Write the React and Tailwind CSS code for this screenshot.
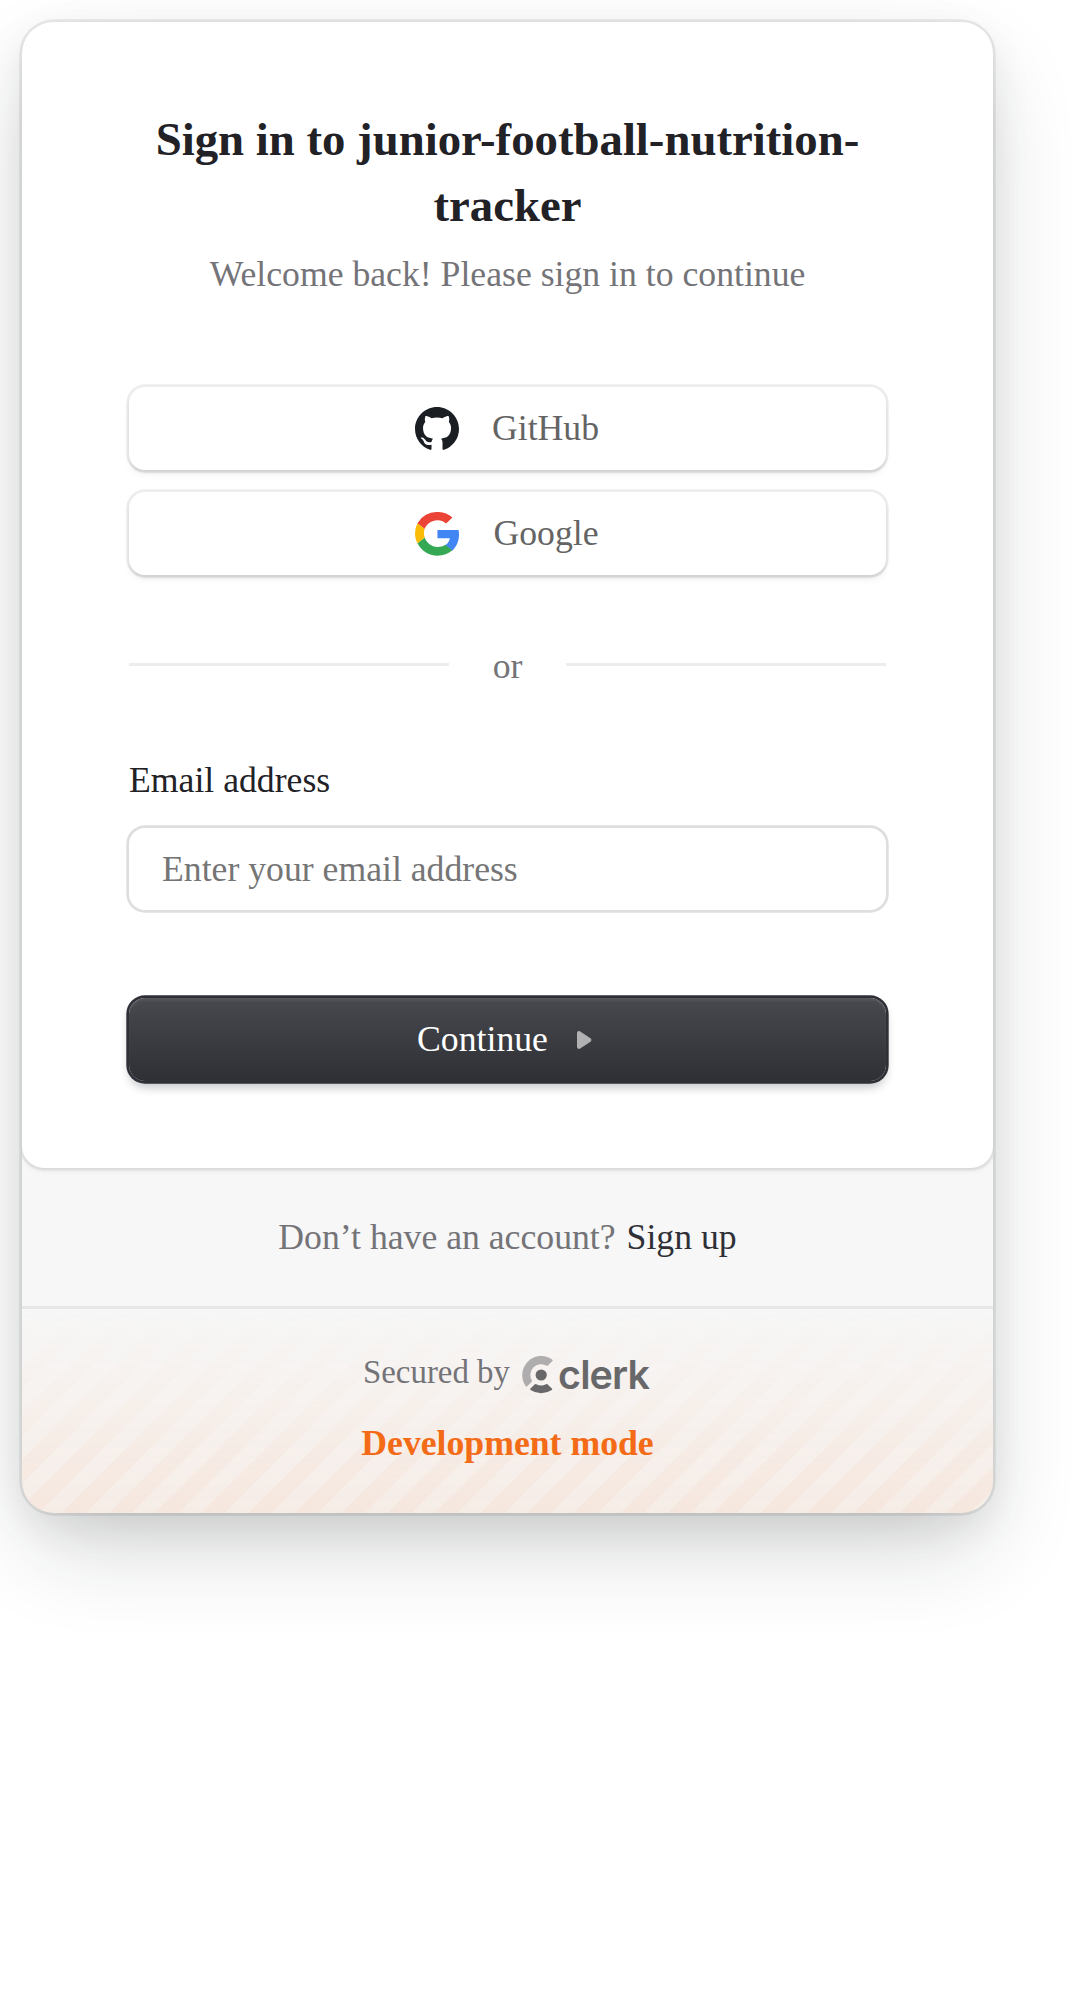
const GithubIcon = () => (
  <svg viewBox="0 0 16 16" className="h-[44px] w-[44px] shrink-0" fill="#1b1f24">
    <path d="M8 0C3.58 0 0 3.58 0 8c0 3.54 2.29 6.53 5.47 7.59.4.07.55-.17.55-.38 0-.19-.01-.82-.01-1.49-2.01.37-2.53-.49-2.69-.94-.09-.23-.48-.94-.82-1.13-.28-.15-.68-.52-.01-.53.63-.01 1.08.58 1.23.82.72 1.21 1.87.87 2.33.66.07-.52.28-.87.51-1.07-1.78-.2-3.64-.89-3.64-3.95 0-.87.31-1.59.82-2.15-.08-.2-.36-1.02.08-2.12 0 0 .67-.21 2.2.82.64-.18 1.32-.27 2-.27s1.36.09 2 .27c1.53-1.04 2.2-.82 2.2-.82.44 1.1.16 1.92.08 2.12.51.56.82 1.27.82 2.15 0 3.07-1.87 3.75-3.65 3.95.29.25.54.73.54 1.48 0 1.07-.01 1.93-.01 2.2 0 .21.15.46.55.38A8.01 8.01 0 0 0 16 8c0-4.42-3.58-8-8-8Z" />
  </svg>
);

const GoogleIcon = () => (
  <svg viewBox="0 0 16 16" className="mr-px h-[44px] w-[44px] shrink-0">
    <path fill="#4285F4" d="M16 8.18c0-.65-.06-1.14-.17-1.64H8.16v2.97h4.5c-.09.74-.58 1.85-1.67 2.6l2.43 1.92.16.02C15.12 12.6 16 10.58 16 8.18Z" />
    <path fill="#34A853" d="M8.16 15.87c2.2 0 4.04-.73 5.4-1.98l-2.57-2c-.7.49-1.62.82-2.83.82-2.15 0-3.98-1.43-4.63-3.4l-2.62 2.05c1.35 2.68 4.08 4.51 7.25 4.51Z" />
    <path fill="#FBBC05" d="M3.53 9.31A4.98 4.98 0 0 1 3.26 7.7c0-.56.1-1.1.26-1.6L.9 4.06A8 8 0 0 0 0 7.8c0 1.28.31 2.49.91 3.56l2.62-2.05Z" />
    <path fill="#EB4335" d="M8.16 3c1.53 0 2.57.67 3.15 1.22l2.3-2.24A7.9 7.9 0 0 0 8.16 0 8.1 8.1 0 0 0 .9 4.06L3.53 6.1C4.18 4.4 6.01 3 8.16 3Z" />
  </svg>
);

const ClerkLogo = () => (
  <span className="mr-[3px] flex items-center text-[#68686b]">
    <svg viewBox="2.35 0 20 24" className="h-[38px] w-[32px]" fill="currentColor">
      <path d="m21.1 20.6-2.6-2.6a.9.9 0 0 0-1.1-.12 6.85 6.85 0 0 1-6.1 0 .9.9 0 0 0-1.1.12l-2.6 2.6a.58.58 0 0 0 .06.88 12 12 0 0 0 13.4 0 .58.58 0 0 0 .04-.88Z" />
      <circle cx="14.35" cy="12" r="3.55" />
      <path opacity=".5" d="m21.47 3.16-2.88 2.88a.57.57 0 0 1-.7.09 6.86 6.86 0 0 0-9.41 9.41.57.57 0 0 1-.08.7l-2.88 2.88a.57.57 0 0 1-.87-.07A12 12 0 0 1 21.4 2.3a.57.57 0 0 1 .07.86Z" />
    </svg>
    <span className="ml-[4px] font-[Inter,sans-serif] text-[39.5px] leading-[38px] font-semibold tracking-[-0.9px]">clerk</span>
  </span>
);

const ProviderButton = ({ icon, label }) => (
  <button className="flex h-[83px] w-full items-center justify-center gap-[33px] rounded-[16px] bg-white pr-px text-[#646464] shadow-[0_0_0_2.7px_rgba(0,0,0,0.07),0_5.5px_8px_-2.7px_rgba(0,0,0,0.08),0_2.7px_2.7px_0_rgba(0,0,0,0.06)]">
    {icon}
    {label}
  </button>
);

export default function App() {
  return (
    <div className="min-h-[1999px] overflow-hidden bg-white pt-[22px] pl-[22px] font-['Liberation_Serif',serif] text-[35.7px] leading-[49px] text-[#747478]">
      <div className="w-[971px] rounded-[32px] bg-[#f7f7f7] shadow-[0_0_0_2.7px_rgba(0,0,0,0.08),0_13.7px_41px_0_rgba(0,0,0,0.08),0_41px_96px_-13.7px_rgba(25,28,33,0.2)]">
        <div className="overflow-hidden rounded-[32px]">
          <main className="flex h-[1146px] flex-col rounded-[22px] bg-white px-[107px] pt-[84px] shadow-[0_0_5.5px_0_rgba(0,0,0,0.08),0_2.7px_5.5px_0_rgba(25,28,33,0.06),0_0_0_2.7px_rgba(0,0,0,0.04)]">
            <h1 className="text-center text-[46.75px] leading-[66px] font-bold text-[#212126]">
              Sign in to junior-football-nutrition-tracker
            </h1>
            <p className="mt-[12px] text-center">Welcome back! Please sign in to continue</p>

            <div className="mt-[88px] flex flex-col gap-[22px]">
              <ProviderButton icon={<GithubIcon />} label="GitHub" />
              <ProviderButton icon={<GoogleIcon />} label="Google" />
            </div>

            <div className="mt-[65px] flex items-center gap-[44px]">
              <span className="h-[3px] flex-1 bg-[#ededed]" />
              <span className="relative top-[2px]">or</span>
              <span className="h-[3px] flex-1 bg-[#ededed]" />
            </div>

            <label htmlFor="email" className="mt-[67px] text-[#212126]">Email address</label>
            <input
              id="email"
              type="email"
              placeholder="Enter your email address"
              className="mt-[23px] h-[82px] w-full rounded-[16px] bg-white px-[33px] shadow-[0_0_0_2.7px_rgba(0,0,0,0.13)] placeholder:text-[#757575]"
            />

            <button className="mt-[88px] flex h-[83px] w-full items-center justify-center gap-[29px] rounded-[16px] bg-linear-to-b from-[#48494e] to-[#2f3036] text-white shadow-[0_0_0_2.7px_#2f3037,inset_0_2.7px_2.7px_0_rgba(255,255,255,0.07),0_5.5px_8px_0_rgba(34,42,53,0.2),0_8px_14px_-2px_rgba(0,0,0,0.08)]">
              Continue
              <svg viewBox="0 0 15 18" className="mr-[6px] h-[18px] w-[15px]" fill="#b1b1b4">
                <path d="M0 2.2v13.6c0 1.7 1.8 2.7 3.2 1.8l10.3-6.9c1.2-.8 1.2-2.5 0-3.4L3.2.4C1.8-.5 0 .5 0 2.2Z" />
              </svg>
            </button>
          </main>

          <p className="flex h-[138px] justify-center gap-[11px] pt-[45px]">
            <span>Don’t have an account?</span>
            <a className="text-[#2f3037]">Sign up</a>
          </p>

          <footer className="relative h-[207px] border-t-[3px] border-[#e7e7e7]">
            <div className="absolute inset-0 bg-[repeating-linear-gradient(-45deg,rgba(243,107,22,0.07),rgba(243,107,22,0.07)_16.46px,rgba(243,107,22,0.11)_16.46px,rgba(243,107,22,0.11)_32.92px)] [mask-image:linear-gradient(transparent,black)]" />
            <div className="relative flex flex-col items-center pt-[43px]">
              <div className="flex h-[46px] items-center gap-[12px] text-[32.9px]">
                <span className="-mt-[5px]">Secured by</span>
                <ClerkLogo />
              </div>
              <p className="mt-[21px] font-bold text-[#f36b16]">Development mode</p>
            </div>
          </footer>
        </div>
      </div>
    </div>
  );
}
